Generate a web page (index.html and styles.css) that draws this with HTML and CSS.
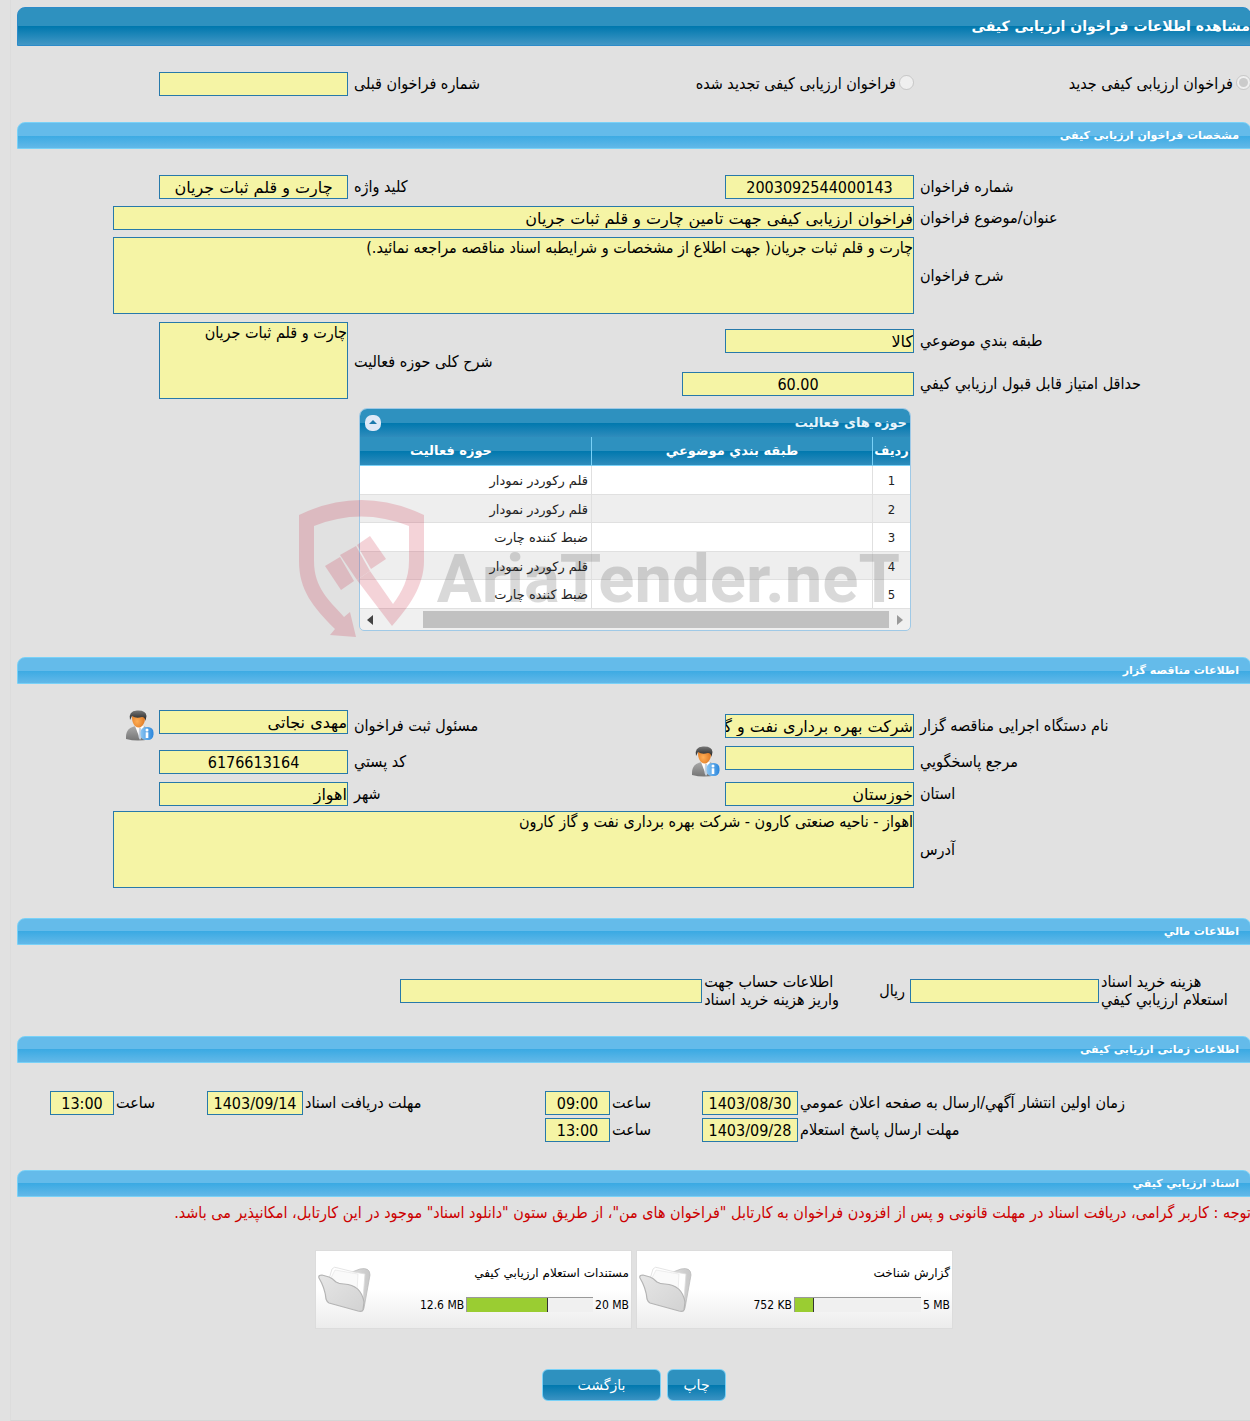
FILE: index.html
```html
<!DOCTYPE html>
<html lang="fa" dir="rtl">
<head>
<meta charset="UTF-8">
<meta name="viewport" content="width=device-width, initial-scale=1.0">
<title>مشاهده اطلاعات فراخوان ارزیابی کیفی</title>
<link rel="stylesheet" href="styles.css">
</head>
<body>
<svg width="0" height="0" class="defs" aria-hidden="true">
    <defs>
        <linearGradient id="gFolder" x1="0" y1="0" x2="1" y2="1"><stop offset="0" stop-color="#e6e6e6"/><stop offset="1" stop-color="#d2d2d2"/></linearGradient>
        <linearGradient id="gBack" x1="0" y1="0" x2="1" y2="0"><stop offset="0" stop-color="#f2f2f2"/><stop offset="1" stop-color="#c8c8c8"/></linearGradient>
        <radialGradient id="gFace" cx="0.4" cy="0.6" r="0.7"><stop offset="0" stop-color="#ffae55"/><stop offset="1" stop-color="#d9701c"/></radialGradient>
        <linearGradient id="gHair" x1="0" y1="0" x2="0" y2="1"><stop offset="0" stop-color="#777"/><stop offset="1" stop-color="#1c1c1c"/></linearGradient>
        <linearGradient id="gCoat" x1="0" y1="0" x2="0" y2="1"><stop offset="0" stop-color="#aaa"/><stop offset="1" stop-color="#757575"/></linearGradient>
        <linearGradient id="gInfo" x1="0" y1="0" x2="1" y2="0"><stop offset="0" stop-color="#8cc6f2"/><stop offset="1" stop-color="#2a86dc"/></linearGradient>
        <symbol id="user" viewBox="0 0 28 31">
            <path d="M0 27C0 20 4 17 10 16H17C22 17 24 20 24 29Q12 32 0 29Z" fill="url(#gCoat)"/>
            <path d="M9 16L14 29L18 16Z" fill="#fff"/>
            <path d="M13 18H15L16 27L14 30L12.500 27Z" fill="#c9d3df"/>
            <path d="M6 7Q6 2 12.500 2Q19 2 19 8Q19 14 15 17Q12 18.500 9 16Q6 13 6 7Z" fill="url(#gFace)"/>
            <path d="M4 10Q2 1 11 0.500Q20 0 20.500 6L19.500 11Q19 7 16 7Q10 9 6 6Z" fill="url(#gHair)"/>
            <rect x="14.500" y="17" width="13" height="13" rx="5.500" fill="url(#gInfo)"/>
            <circle cx="21" cy="20" r="1.500" fill="#fff"/>
            <rect x="19.700" y="22.300" width="2.600" height="5.700" fill="#fff"/>
        </symbol>
        <symbol id="folder" viewBox="0 0 54 48">
            <path d="M34 7L42 4Q52 2 52 10L46 43Q45 48 41 45L14 35Z" fill="url(#gBack)" stroke="#bbb" stroke-width="0.800"/>
            <path d="M11 14L14 4Q16 1 20 3L36 7L47 9L45 34L38 26Z" fill="#fff" stroke="#ddd" stroke-width="0.800"/>
            <path d="M13 13L17 5L40 9L39 26" fill="#fafafa" stroke="#e2e2e2" stroke-width="0.600"/>
            <path d="M1 13Q0 10 4 10L11 12Q14 13 18 17Q21 19 26 19Q43 20 46 37L45 45Q44 47 40 46L11 38Q9 37 8 34Q7 23 1 13Z" fill="url(#gFolder)" stroke="#b4b4b4" stroke-width="1.200"/>
        </symbol>
    </defs>
</svg>

<main class="page">
    <h1 class="title-bar">مشاهده اطلاعات فراخوان ارزیابی کیفی</h1>

    <form id="callForm">
    <div class="fields fields-type">
        <div class="radio">
            <input type="radio" id="newCall" name="callType" checked disabled>
            <label for="newCall">فراخوان ارزیابی کیفی جدید</label>
        </div>
        <div class="radio">
            <input type="radio" id="renewedCall" name="callType" disabled>
            <label for="renewedCall">فراخوان ارزیابی کیفی تجدید شده</label>
        </div>
        <label class="label" for="prevNo">شماره فراخوان قبلی</label>
        <input class="box" type="text" id="prevNo" readonly>
    </div>

    <h2 class="bar">مشخصات فراخوان ارزیابی کیفی</h2>
    <div class="fields">
        <label class="label" for="callNo">شماره فراخوان</label>
        <input class="box number" type="text" id="callNo" value="2003092544000143" readonly>
        <label class="label" for="keyword">کلید واژه</label>
        <input class="box center" type="text" id="keyword" value="چارت و قلم ثبات جریان" readonly>

        <label class="label" for="subject">عنوان/موضوع فراخوان</label>
        <input class="box wide" type="text" id="subject" value="فراخوان ارزیابی کیفی جهت تامین چارت و قلم ثبات جریان" readonly>

        <label class="label" for="desc">شرح فراخوان</label>
        <textarea class="area wide" id="desc" readonly>چارت و قلم ثبات جریان( جهت اطلاع از مشخصات و شرایطبه اسناد مناقصه مراجعه نمائید.)</textarea>
    </div>
    <div class="fields fields-tall">
        <label class="label" for="category">طبقه بندي موضوعي</label>
        <input class="box" type="text" id="category" value="کالا" readonly>
        <label class="label two-rows" for="scope">شرح کلی حوزه فعالیت</label>
        <textarea class="area two-rows" id="scope" readonly>چارت و قلم ثبات جریان</textarea>
        <label class="label" for="minScore">حداقل امتیاز قابل قبول ارزیابي کیفي</label>
        <input class="box medium number" type="text" id="minScore" value="60.00" readonly>
    </div>

    <div class="grid-holder">
        <section class="panel">
            <header class="panel-head">
                <h3>حوزه های فعالیت</h3>
                <button type="button" class="toggle" aria-label="بستن">
                    <svg viewBox="0 0 16 16"><path d="M4 9L8 5L12 9Z" fill="#1c7aad"/></svg>
                </button>
            </header>
            <div class="table-wrap">
                <table>
                    <colgroup><col class="col-no"><col class="col-data"><col class="col-data"></colgroup>
                    <thead>
                        <tr><th>ردیف</th><th>طبقه بندي موضوعي</th><th>حوزه فعالیت</th></tr>
                    </thead>
                    <tbody>
                        <tr><td>1</td><td></td><td>قلم رکوردر نمودار</td></tr>
                        <tr><td>2</td><td></td><td>قلم رکوردر نمودار</td></tr>
                        <tr><td>3</td><td></td><td>ضبط کننده چارت</td></tr>
                        <tr><td>4</td><td></td><td>قلم رکوردر نمودار</td></tr>
                        <tr><td>5</td><td></td><td>ضبط کننده چارت</td></tr>
                    </tbody>
                </table>
            </div>
            <div class="scroll">
                <span class="arrow arrow-right"></span>
                <span class="thumb"></span>
                <span class="arrow arrow-left"></span>
            </div>
        </section>
        <div class="watermark" dir="ltr">
            <svg viewBox="0 0 126 138">
                <g fill="#c8102e">
                    <path d="M0 15Q62 -15 125 15V61C125 86 110 107 93 126L58 80L71 71L94 104C103 92 110 79 110 61V26Q62 7 15 26V61C15 88 30 100 45 117L51 112L57 137L31 135L36 129C14 107 0 90 0 61Z"/>
                    <path d="M26 66L41 57L55 81L42 90Z"/>
                    <path d="M41 55L57 46L71 71L58 80Z"/>
                    <path d="M58 45L71 36L87 59L72 69Z"/>
                </g>
            </svg>
            <span>AriaTender.neT</span>
        </div>
    </div>

    <h2 class="bar">اطلاعات مناقصه گزار</h2>
    <div class="fields fields-org">
        <label class="label" for="org">نام دستگاه اجرایی مناقصه گزار</label>
        <input class="box" type="text" id="org" value="شرکت بهره برداری نفت و گاز کارون" readonly>
        <label class="label" for="registrar">مسئول ثبت فراخوان</label>
        <div class="with-icon">
            <input class="box" type="text" id="registrar" value="مهدی نجاتی" readonly>
            <svg class="user"><use href="#user"/></svg>
        </div>

        <label class="label" for="contact">مرجع پاسخگویي</label>
        <div class="with-icon">
            <input class="box" type="text" id="contact" readonly>
            <svg class="user"><use href="#user"/></svg>
        </div>
        <label class="label" for="postal">کد پستي</label>
        <input class="box number" type="text" id="postal" value="6176613164" readonly>

        <label class="label" for="province">استان</label>
        <input class="box" type="text" id="province" value="خوزستان" readonly>
        <label class="label" for="city">شهر</label>
        <input class="box" type="text" id="city" value="اهواز" readonly>

        <label class="label" for="address">آدرس</label>
        <textarea class="area wide" id="address" readonly>اهواز - ناحیه صنعتی کارون - شرکت بهره برداری نفت و گاز کارون</textarea>
    </div>

    <h2 class="bar">اطلاعات مالي</h2>
    <div class="finance">
        <label for="price">هزینه خرید اسناد<br>استعلام ارزیابي کیفي</label>
        <input class="box" type="text" id="price" readonly>
        <span class="unit">ریال</span>
        <label for="account">اطلاعات حساب جهت<br>واریز هزینه خرید اسناد</label>
        <input class="box account" type="text" id="account" readonly>
    </div>

    <h2 class="bar">اطلاعات زمانی ارزیابی کیفی</h2>
    <div class="times">
        <label class="first" for="pubDate">زمان اولین انتشار آگهي/ارسال به صفحه اعلان عمومي</label>
        <input class="box number" type="text" id="pubDate" value="1403/08/30" readonly>
        <label for="pubTime">ساعت</label>
        <input class="box number" type="text" id="pubTime" value="09:00" readonly>
        <label for="docDate">مهلت دریافت اسناد</label>
        <input class="box number" type="text" id="docDate" value="1403/09/14" readonly>
        <label for="docTime">ساعت</label>
        <input class="box number" type="text" id="docTime" value="13:00" readonly>

        <label class="first" for="ansDate">مهلت ارسال پاسخ استعلام</label>
        <input class="box number" type="text" id="ansDate" value="1403/09/28" readonly>
        <label for="ansTime">ساعت</label>
        <input class="box number" type="text" id="ansTime" value="13:00" readonly>
    </div>

    <h2 class="bar bar-docs">اسناد ارزیابي کیفي</h2>
    <p class="notice">توجه : کاربر گرامی، دریافت اسناد در مهلت قانونی و پس از افزودن فراخوان به کارتابل "فراخوان های من"، از طریق ستون "دانلود اسناد" موجود در این کارتابل، امکانپذیر می باشد.</p>
    <div class="docs">
        <div class="doc">
            <div class="doc-info">
                <div>گزارش شناخت</div>
                <div class="usage">
                    <span dir="ltr">5 MB</span>
                    <div class="meter"><div class="used" style="width: 15%"></div></div>
                    <span dir="ltr">752 KB</span>
                </div>
            </div>
            <svg class="folder"><use href="#folder"/></svg>
        </div>
        <div class="doc">
            <div class="doc-info">
                <div>مستندات استعلام ارزیابي کیفي</div>
                <div class="usage">
                    <span dir="ltr">20 MB</span>
                    <div class="meter"><div class="used" style="width: 64%"></div></div>
                    <span dir="ltr">12.6 MB</span>
                </div>
            </div>
            <svg class="folder"><use href="#folder"/></svg>
        </div>
    </div>

    <div class="actions">
        <button type="button" class="btn">چاپ</button>
        <button type="button" class="btn btn-back">بازگشت</button>
    </div>
    </form>
</main>
</body>
</html>
```
FILE: styles.css
```css
* {
  box-sizing: border-box;
}
body {
  margin: 0;
  background-color: #e1e1e1;
  color: #000;
  font-family: "DejaVu Sans Condensed", "DejaVu Sans", sans-serif;
  font-size: 16px;
  line-height: 18px;
  overflow-x: hidden;
}
input,
textarea,
button {
  font-family: inherit;
}
.defs {
  position: absolute;
}
.page {
  margin: 0 -1px 0 10px;
  padding: 7px 0 19px 6px;
  border-left: 1px solid #dcdcdc;
  border-bottom: 1px solid #d6d6d6;
}

/* header bars */
.title-bar,
.bar,
.box,
.panel,
.doc,
.btn {
  font-family: "DejaVu Sans", sans-serif;
}
.title-bar {
  margin: 0 0 26px;
  height: 39px;
  line-height: 37px;
  border: 1px solid #2c8bc9;
  border-radius: 8px 8px 0 0;
  background: linear-gradient(#2e91bf 0 50%, #0078ae 50%, #4297c5);
  color: #fff;
  font-size: 14px;
}
.bar {
  margin: 0 0 26px;
  padding: 0 11px;
  height: 27px;
  line-height: 26px;
  border: 1px solid #79d1f7;
  border-radius: 8px 8px 0 0;
  background: linear-gradient(#64bbea 0 50%, #3baae3 50%, #62b8e8);
  color: #fff;
  font-size: 11px;
}
.bar-docs {
  margin-bottom: 7px;
}

/* label + field grid */
.fields {
  display: grid;
  grid-template-columns: 337fr 283fr 283fr 331fr;
  gap: 7px 0;
  align-items: center;
  margin-bottom: 8px;
}
.label {
  padding-left: 6px;
  text-align: left;
}
.box,
.area {
  border: 1px solid #2779aa;
  border-radius: 0;
  background-color: #f5f4a5;
  color: #000;
  outline: none;
}
.box {
  width: 189px;
  height: 24px;
  padding: 1px 0 0;
  font-size: 16px;
}
.center {
  text-align: center;
}
.number {
  font-family: "DejaVu Sans Condensed", "DejaVu Sans", sans-serif;
  text-align: center;
}
.area {
  display: block;
  width: 189px;
  height: 77px;
  padding: 0;
  font-size: 16px;
  line-height: 20px;
  resize: none;
  overflow: hidden;
}
.wide {
  grid-column: 2 / 5;
  width: 801px;
}
.medium {
  width: 232px;
}
.fields-type {
  margin-bottom: 26px;
}
.radio {
  display: flex;
  align-items: center;
  gap: 3px;
}
.radio input {
  width: 15px;
  height: 15px;
  margin: 0 0 4px;
}
.fields-tall {
  grid-auto-rows: 37px;
  gap: 6px 0;
  margin-bottom: 6px;
}
.two-rows {
  grid-row: 1 / 3;
}
.fields-tall .label.two-rows {
  grid-column: 3;
}
.fields-tall .area.two-rows {
  grid-column: 4;
  align-self: start;
}
.fields-org {
  gap: 5px 0;
  margin-bottom: 30px;
}
.with-icon {
  display: flex;
  align-items: flex-start;
  gap: 5px;
}
.user {
  width: 28px;
  height: 31px;
}

/* activity table */
.grid-holder {
  position: relative;
  margin-bottom: 26px;
  padding-right: 340px;
}
.panel {
  width: 552px;
  border: 1px solid #9fc9e6;
  border-radius: 8px 8px 5px 5px;
  background-color: #f0f0f0;
  overflow: hidden;
}
.panel-head {
  display: flex;
  align-items: center;
  justify-content: space-between;
  height: 28px;
  padding: 0 3px 0 5px;
  background: linear-gradient(#2e91bf 0 50%, #0078ae 50%, #2f8cbc);
  color: #e6f4fb;
}
.panel-head h3 {
  margin: 0;
  font-size: 13px;
}
.toggle {
  width: 16px;
  height: 16px;
  padding: 0;
  border: none;
  border-radius: 7px;
  background-color: #dfe9f7;
}
.toggle svg {
  display: block;
}
.table-wrap {
  overflow: hidden;
}
table {
  width: 600px;
  table-layout: fixed;
  border-collapse: separate;
  border-spacing: 0;
}
.col-no {
  width: 38px;
}
th {
  height: 29px;
  padding: 0;
  border-left: 1px solid #79d1f7;
  border-bottom: 1px solid #79d1f7;
  background: linear-gradient(#2e91bf 0 50%, #0078ae 50%, #2f8cbc);
  color: #fff;
  font-size: 13px;
  white-space: nowrap;
}
td {
  height: 29px;
  padding: 2px 3px 0;
  border-left: 1px solid #e0e0e0;
  border-bottom: 1px solid #e0e0e0;
  background-color: #fff;
  color: #222;
  font-size: 13px;
}
tr:nth-child(even) td {
  height: 28px;
  background-color: #eee;
}
td:first-child {
  font-family: "DejaVu Sans Condensed", "DejaVu Sans", sans-serif;
  text-align: center;
}
.scroll {
  display: flex;
  align-items: center;
  height: 21px;
  padding: 0 7px;
}
.thumb {
  flex: 1;
  height: 17px;
  margin: 0 8px 0 50px;
  background-color: #c1c1c1;
}
.arrow {
  border: 5px solid transparent;
}
.arrow-right {
  border-left: 6px solid #999;
  border-right: none;
}
.arrow-left {
  border-right: 6px solid #444;
  border-left: none;
}
.watermark {
  position: absolute;
  top: 92px;
  right: 351px;
  display: flex;
  align-items: center;
  gap: 12px;
  opacity: 0.18;
  color: #333;
  font-family: "Roboto", sans-serif;
  font-size: 67px;
  font-weight: bold;
  line-height: 66px;
  pointer-events: none;
}
.watermark svg {
  width: 126px;
  height: 138px;
}
.watermark span {
  padding-top: 20px;
}

/* finance and schedule rows */
.finance {
  display: flex;
  align-items: center;
  gap: 2px;
  padding: 2px 13px 0 0;
  margin-bottom: 27px;
}
.finance label {
  min-width: 137px;
  text-align: left;
}
.unit {
  margin-right: 3px;
  margin-left: 36px;
}
.account {
  width: 302px;
}
.times {
  display: grid;
  grid-template-columns: 453fr 96px 92fr 65px 242fr 96px 93fr 64px 33fr;
  gap: 3px 0;
  align-items: center;
  padding-top: 2px;
  margin-bottom: 28px;
}
.times label {
  padding-left: 2px;
  text-align: left;
}
.times .first {
  grid-column: 1;
}
.times .box {
  width: 100%;
}

/* documents */
.notice {
  margin: 0 0 28px;
  color: #cc0000;
  white-space: nowrap;
}
.docs {
  display: flex;
  justify-content: center;
  gap: 4px;
  margin-bottom: 40px;
}
.doc {
  display: flex;
  align-items: center;
  width: 317px;
  height: 79px;
  padding: 0 2px 2px;
  border: 1px solid #dcdcdc;
  background: linear-gradient(#fff 50%, #ececec);
  font-size: 12px;
}
.doc-info {
  flex: 1;
}
.usage {
  display: flex;
  align-items: center;
  gap: 2px;
  margin-top: 14px;
  font-family: "DejaVu Sans Condensed", "DejaVu Sans", sans-serif;
}
.meter {
  width: 127px;
  height: 15px;
  border-top: 1px solid #999;
  border-left: 1px solid #999;
  background-color: #f0f0f0;
  direction: ltr;
}
.used {
  height: 14px;
  border-right: 1px solid #333;
  background-color: #9acd32;
}
.folder {
  width: 54px;
  height: 48px;
}
.actions {
  display: flex;
  justify-content: center;
  gap: 6px;
}
.btn {
  min-width: 59px;
  height: 32px;
  padding: 0;
  border: 1px solid #79d1f7;
  border-radius: 6px;
  background: linear-gradient(#2e91bf 0 50%, #0078ae 50%, #3a92c2);
  color: #fff;
  font-size: 14px;
  cursor: pointer;
}
.btn-back {
  min-width: 119px;
}
```
